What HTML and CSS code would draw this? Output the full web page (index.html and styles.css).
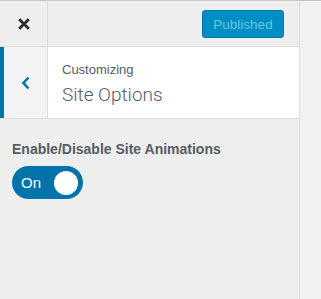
FILE: index.html
```html
<!DOCTYPE html>
<html>
<head>
<meta charset="utf-8">
<link rel="stylesheet" href="styles.css">
</head>
<body>
<div class="page">
  <div class="sidebar">
    <div class="header">
      <div class="close">
        <svg width="14" height="14" viewBox="0 0 14 14"><path d="M2.2 2.2 L11.8 11.8 M11.8 2.2 L2.2 11.8" stroke="#2d2d2d" stroke-width="2.8" stroke-linecap="butt"/></svg>
      </div>
      <div class="actions">
        <button class="publish">Published</button>
      </div>
    </div>
    <div class="section-title">
      <div class="back">
        <svg width="10" height="14" viewBox="0 0 10 14"><path d="M7.5 1.5 L2.5 7 L7.5 12.5" fill="none" stroke="#0073aa" stroke-width="2.6"/></svg>
      </div>
      <div class="titles">
        <span class="small">Customizing</span>
        <span class="big">Site Options</span>
      </div>
    </div>
    <div class="controls">
      <div class="label">Enable/Disable Site Animations</div>
      <div class="toggle">
        <span class="on">On</span>
        <span class="knob"></span>
      </div>
    </div>
  </div>
  <div class="preview"></div>
</div>
</body>
</html>
```
FILE: styles.css
```css
html, body {
  margin: 0;
  padding: 0;
  height: 100%;
}
body {
  font-family: "Liberation Sans", Arial, sans-serif;
  background: #f1f1f1;
  border-top: 1px solid #c6c6c6;
  box-sizing: border-box;
}
.page {
  display: flex;
  height: 100%;
}
.sidebar {
  width: 299px;
  background: #eeeeee;
  border-right: 1px solid #dddddd;
  display: flex;
  flex-direction: column;
}
.preview {
  flex: 1;
  background: #f1f1f1;
}
.header {
  display: flex;
  height: 45px;
  border-bottom: 1px solid #dddddd;
}
.close {
  width: 47px;
  border-right: 1px solid #dddddd;
  display: flex;
  align-items: center;
  justify-content: center;
}
.actions {
  flex: 1;
  display: flex;
  justify-content: flex-end;
  align-items: flex-start;
  padding-right: 15px;
}
.publish {
  margin-top: 9px;
  width: 82px;
  height: 28px;
  background: #008ec2;
  border: 1px solid #0079a8;
  border-radius: 3px;
  color: #66c6e4;
  font-family: inherit;
  font-size: 13.5px;
  padding: 0;
}
.section-title {
  display: flex;
  height: 71px;
  background: #ffffff;
  border-bottom: 1px solid #dddddd;
}
.back {
  width: 43px;
  border-left: 4px solid #0073aa;
  border-right: 1px solid #dddddd;
  background: #f3f3f5;
  display: flex;
  align-items: center;
  justify-content: center;
}
.titles {
  display: flex;
  flex-direction: column;
  padding: 14px 0 0 14px;
  color: #555d66;
}
.small {
  font-size: 13px;
  line-height: 18px;
}
.big {
  font-family: Roboto, "Liberation Sans", sans-serif;
  font-size: 19px;
  font-weight: 300;
  line-height: 28px;
  margin-top: 2px;
}
.controls {
  padding: 20px 12px;
}
.label {
  font-size: 14px;
  font-weight: bold;
  color: #555d66;
  line-height: 20px;
}
.toggle {
  margin-top: 7px;
  width: 71px;
  height: 33px;
  border-radius: 17px;
  background: #0073aa;
  display: flex;
  align-items: center;
  justify-content: space-between;
  padding: 0 5px 0 9px;
  box-sizing: border-box;
}
.on {
  color: #ffffff;
  font-size: 15px;
}
.knob {
  width: 24px;
  height: 24px;
  border-radius: 50%;
  background: #ffffff;
}
```
